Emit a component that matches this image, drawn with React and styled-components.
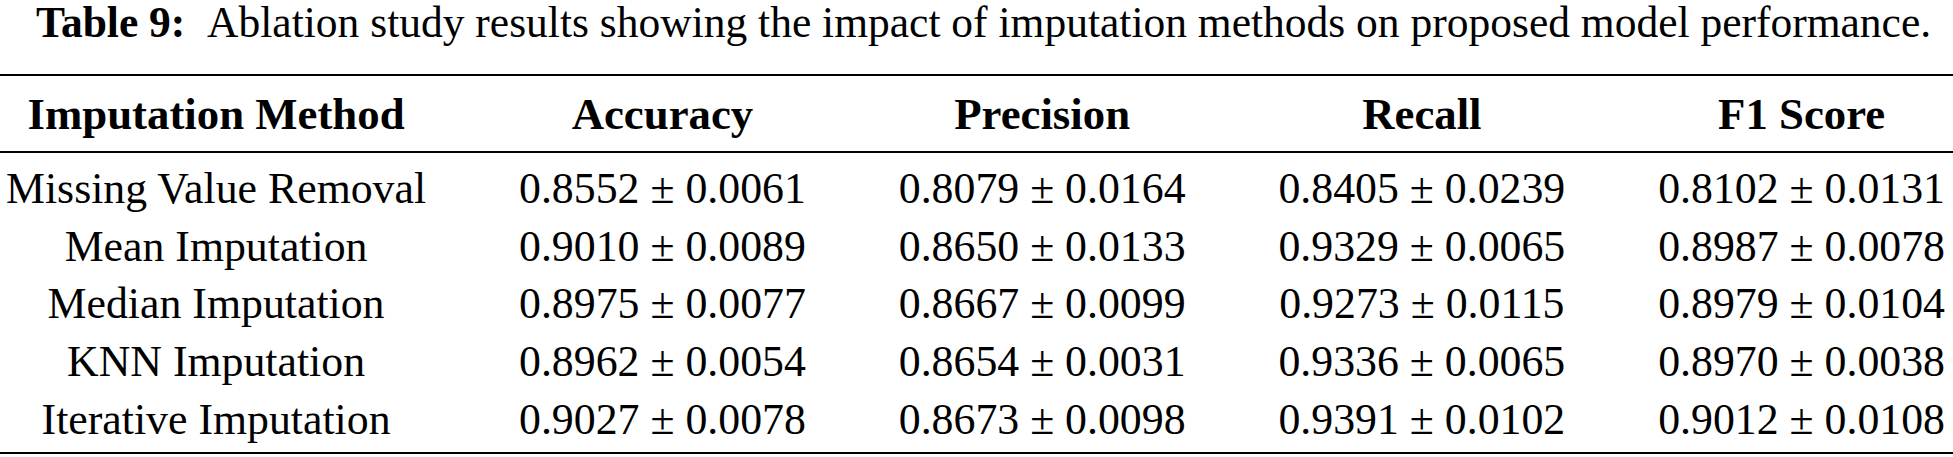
import React from 'react';
import styled, { createGlobalStyle } from 'styled-components';

const GlobalStyle = createGlobalStyle`
  html, body {
    margin: 0;
    padding: 0;
    background: #ffffff;
  }
  body {
    width: 1953px;
    height: 457px;
    overflow: hidden;
    font-family: "Liberation Serif", "Times New Roman", serif;
    color: #000000;
  }
`;

const columns = ['Imputation Method', 'Accuracy', 'Precision', 'Recall', 'F1 Score'];

const rows = [
  ['Missing Value Removal', '0.8552 ± 0.0061', '0.8079 ± 0.0164', '0.8405 ± 0.0239', '0.8102 ± 0.0131'],
  ['Mean Imputation', '0.9010 ± 0.0089', '0.8650 ± 0.0133', '0.9329 ± 0.0065', '0.8987 ± 0.0078'],
  ['Median Imputation', '0.8975 ± 0.0077', '0.8667 ± 0.0099', '0.9273 ± 0.0115', '0.8979 ± 0.0104'],
  ['KNN Imputation', '0.8962 ± 0.0054', '0.8654 ± 0.0031', '0.9336 ± 0.0065', '0.8970 ± 0.0038'],
  ['Iterative Imputation', '0.9027 ± 0.0078', '0.8673 ± 0.0098', '0.9391 ± 0.0102', '0.9012 ± 0.0108'],
];

function App() {
  return (
    <>
      <GlobalStyle />
      <StPage>
        <StCaption>
          <StCaptionLabel>Table 9:</StCaptionLabel>
          {'\u2002'}Ablation study results showing the impact of imputation methods on proposed model performance.
        </StCaption>
        <StTable>
          <StRule />
          {columns.map((col) => (
            <StHeadCell key={col}>{col}</StHeadCell>
          ))}
          <StRule />
          {rows.map((row, i) =>
            row.map((value, j) => (
              <StCell key={`${i}-${j}`} $first={i === 0} $last={i === rows.length - 1}>
                {value}
              </StCell>
            ))
          )}
          <StRule />
        </StTable>
      </StPage>
    </>
  );
}

export default App;

const StPage = styled.div`
  display: flex;
  flex-direction: column;
  width: 1953px;
`;

const StCaption = styled.div`
  font-size: 43.5px;
  line-height: 44px;
  height: 44px;
  text-align: center;
  white-space: nowrap;
  padding-left: 14px;
`;

const StCaptionLabel = styled.span`
  font-weight: 700;
`;

const StTable = styled.div`
  display: grid;
  grid-template-columns: repeat(5, auto);
  justify-content: space-between;
  margin-top: 30px;
  padding: 0 8px 0 6px;
`;

const StRule = styled.div`
  grid-column: 1 / -1;
  height: 2px;
  margin: 0 -8px 0 -6px;
  background: #000000;
`;

const StHeadCell = styled.div`
  font-size: 44.8px;
  font-weight: 700;
  line-height: 57.75px;
  text-align: center;
  white-space: nowrap;
  padding: 10px 0 7px;
`;

const StCell = styled.div`
  font-size: 43.8px;
  line-height: 57.75px;
  text-align: center;
  white-space: nowrap;
  padding-top: ${(p) => (p.$first ? '7px' : '0')};
  padding-bottom: ${(p) => (p.$last ? '3px' : '0')};
`;
